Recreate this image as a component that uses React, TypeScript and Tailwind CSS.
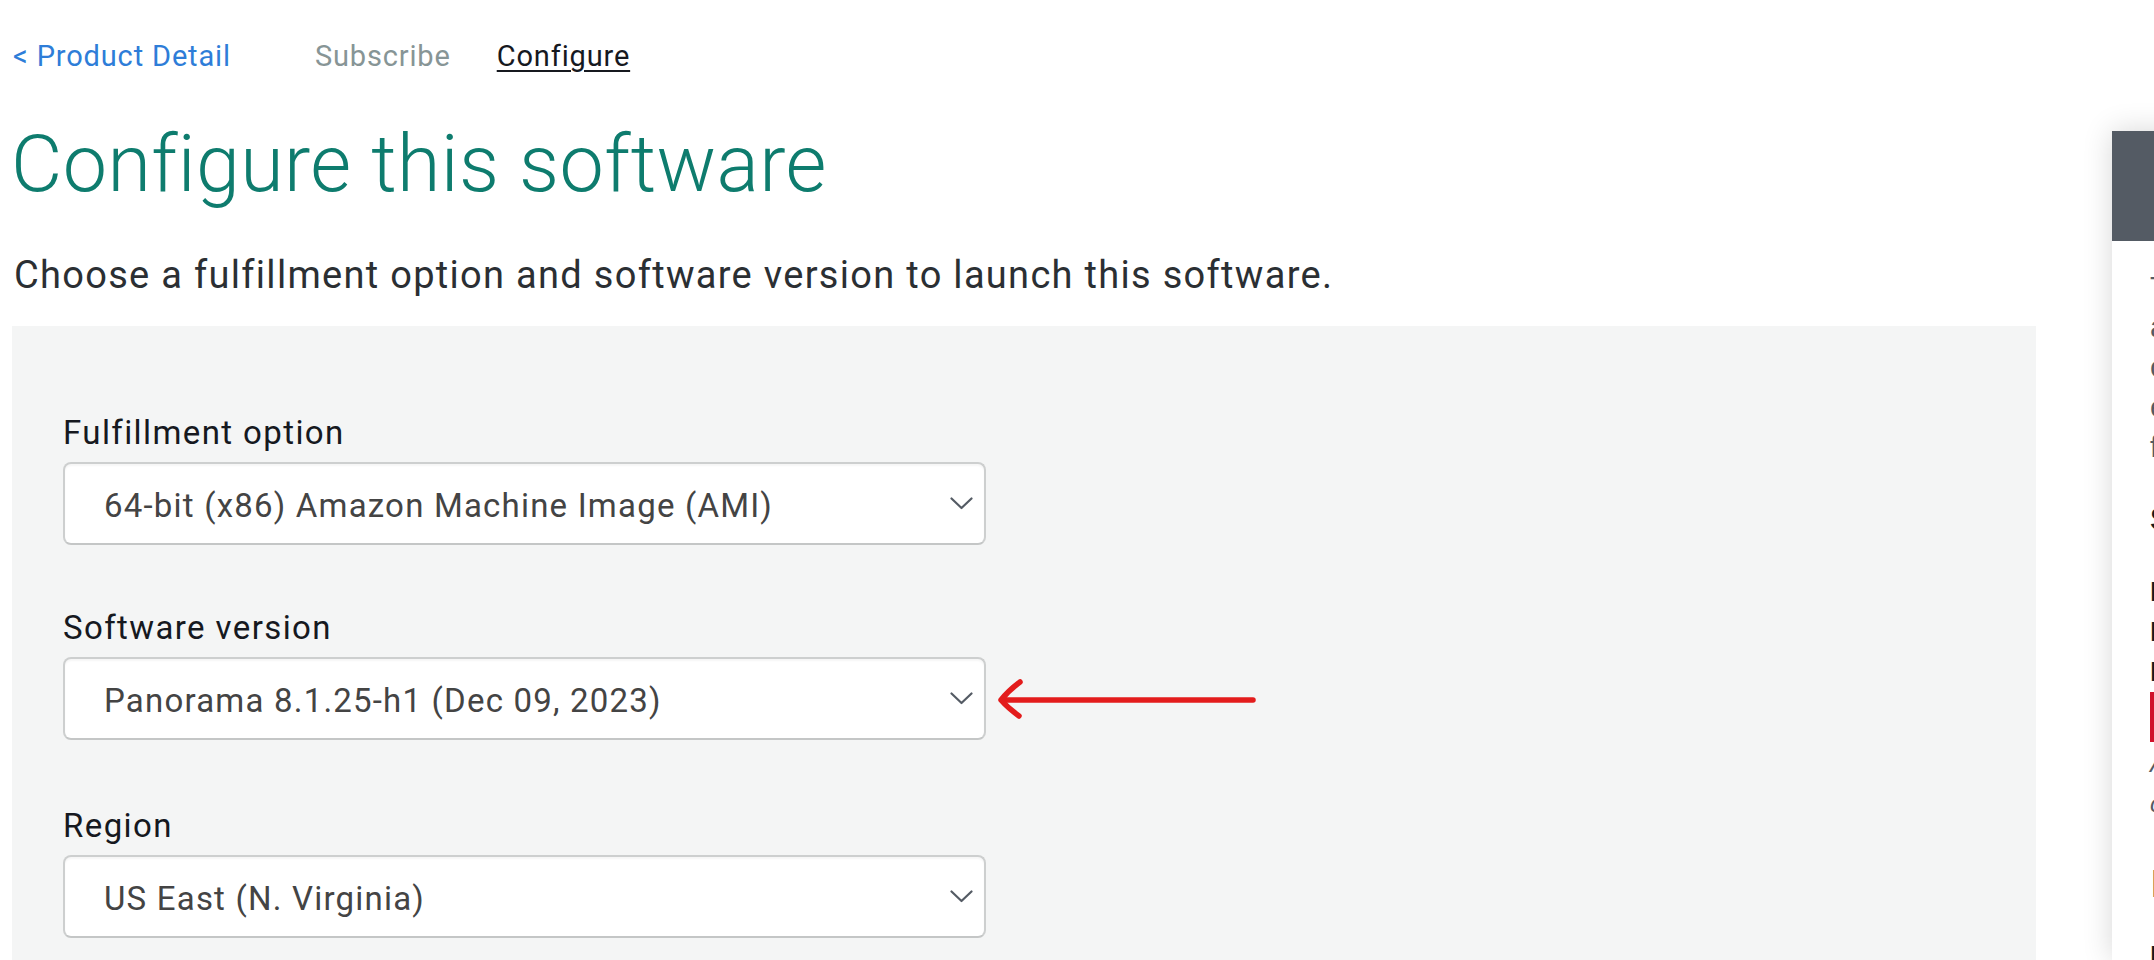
import type { ReactNode } from 'react';

const FONT = "font-['Roboto','Liberation_Sans',sans-serif]";

interface SelectFieldProps {
  label: string;
  value: string;
  className?: string;
  children?: ReactNode;
}

function Chevron() {
  return (
    <svg width="23" height="13" viewBox="0 0 23 13" fill="none" className="shrink-0">
      <polyline points="1.5,1.5 11.5,11 21.5,1.5" stroke="#545b64" strokeWidth="2.2" strokeLinecap="round" strokeLinejoin="round" />
    </svg>
  );
}

// 注釈の赤い矢印
function RedArrow() {
  return (
    <svg width="262" height="44" viewBox="0 0 262 44" fill="none" className="ml-[10px] shrink-0">
      <path d="M257 23 H6" stroke="#e31c1c" strokeWidth="5.5" strokeLinecap="round" />
      <path d="M24 5 Q12 14 5 23 Q12 31 23 39" stroke="#e31c1c" strokeWidth="5.5" strokeLinecap="round" strokeLinejoin="round" />
    </svg>
  );
}

function SelectField({ label, value, className = '', children }: SelectFieldProps) {
  return (
    <div className={className}>
      <div className="text-[33px] leading-[40px] tracking-[1.4px] text-[#16191f]">{label}</div>
      <div className="mt-[9px] flex items-center">
        <div className="w-[923px] h-[83px] shrink-0 flex items-center justify-between bg-white border-2 border-[#cdcfcf] border-b-[#c4c6c6] rounded-[8px] pl-[39px] pr-[11px] shadow-[inset_0_2px_2px_rgba(0,0,0,0.04)]">
          <span className="mt-[4px] text-[33px] leading-[40px] tracking-[1.2px] text-[#444]">{value}</span>
          <Chevron />
        </div>
        {children}
      </div>
    </div>
  );
}

function SidePanel() {
  const line = 'whitespace-nowrap';
  return (
    <div className="mt-[131px] ml-[76px] w-[420px] shrink-0 bg-white shadow-[0_0_28px_rgba(0,0,0,0.16)] font-['Liberation_Sans',Arial,sans-serif] overflow-hidden">
      <div className="h-[110px] bg-[#545b64]" />
      <div className="pl-[38px]">
        <div className="mt-[26px] text-[30px] leading-[40px] text-[#545b64]">
          <div className={line}>This is an estimate of typical software and</div>
          <div className={line}>and infrastructure costs based on your</div>
          <div className={line}>configuration. Your actual charges for each</div>
          <div className={line}>each statement period may differ from</div>
          <div className={line}>from this estimate.</div>
        </div>
        <div className="mt-[32px] text-[32px] leading-[40px] font-bold text-[#16191f] whitespace-nowrap">Software Pricing</div>
        <div className="mt-[33px] text-[28px] leading-[40px] font-bold text-[#16191f]">
          <div className={line}>Palo Alto Networks Panorama</div>
          <div className={line}>BYOL</div>
          <div className={line}>Bring Your Own License</div>
        </div>
        <div className="h-[50px] w-[300px] bg-[#d0112b]" />
        <div className="mt-[2px] text-[24px] leading-[40px] italic text-[#545b64]">
          <div className={line}>Additional taxes or fees may apply.</div>
          <div className={line}>charges may apply.</div>
        </div>
        <div className="mt-[36px] text-[39px] leading-[48px] text-[#16191f] whitespace-nowrap">Infrastructure Pricing</div>
        <div className="mt-[28px] text-[28px] leading-[40px] font-bold text-[#16191f] whitespace-nowrap">EC2: 1 * m5.2xlarge</div>
      </div>
    </div>
  );
}

export default function App() {
  return (
    <div className={`w-full h-[960px] overflow-hidden bg-white flex ${FONT}`}>
      <div className="ml-[12px] w-[2024px] shrink-0 flex flex-col">
        {/* パンくず */}
        <nav className="pt-[38px] ml-[1px] flex text-[29px] leading-[36px] tracking-[0.85px]">
          <a className="text-[#2e7dd8]">&lt; Product Detail</a>
          <span className="ml-[84px] text-[#879596]">Subscribe</span>
          <span className="ml-[46px] text-[#16191f] underline decoration-2 underline-offset-[4px]">Configure</span>
        </nav>

        <h1 className="mt-[42px] -ml-[1px] text-[79px] leading-[96px] font-light tracking-[0.4px] text-[#0e7c6e]">Configure this software</h1>
        <p className="mt-[41px] ml-[2px] text-[38px] leading-[44px] tracking-[1.3px] text-[#2b2f33]">
          Choose a fulfillment option and software version to launch this software.
        </p>

        <div className="mt-[29px] flex-1 bg-[#f4f5f5] pl-[51px] pt-[87px]">
          <SelectField label="Fulfillment option" value="64-bit (x86) Amazon Machine Image (AMI)" />
          <SelectField className="mt-[63px]" label="Software version" value="Panorama 8.1.25-h1 (Dec 09, 2023)">
            <RedArrow />
          </SelectField>
          <SelectField className="mt-[66px]" label="Region" value="US East (N. Virginia)" />
        </div>
      </div>
      <SidePanel />
    </div>
  );
}
